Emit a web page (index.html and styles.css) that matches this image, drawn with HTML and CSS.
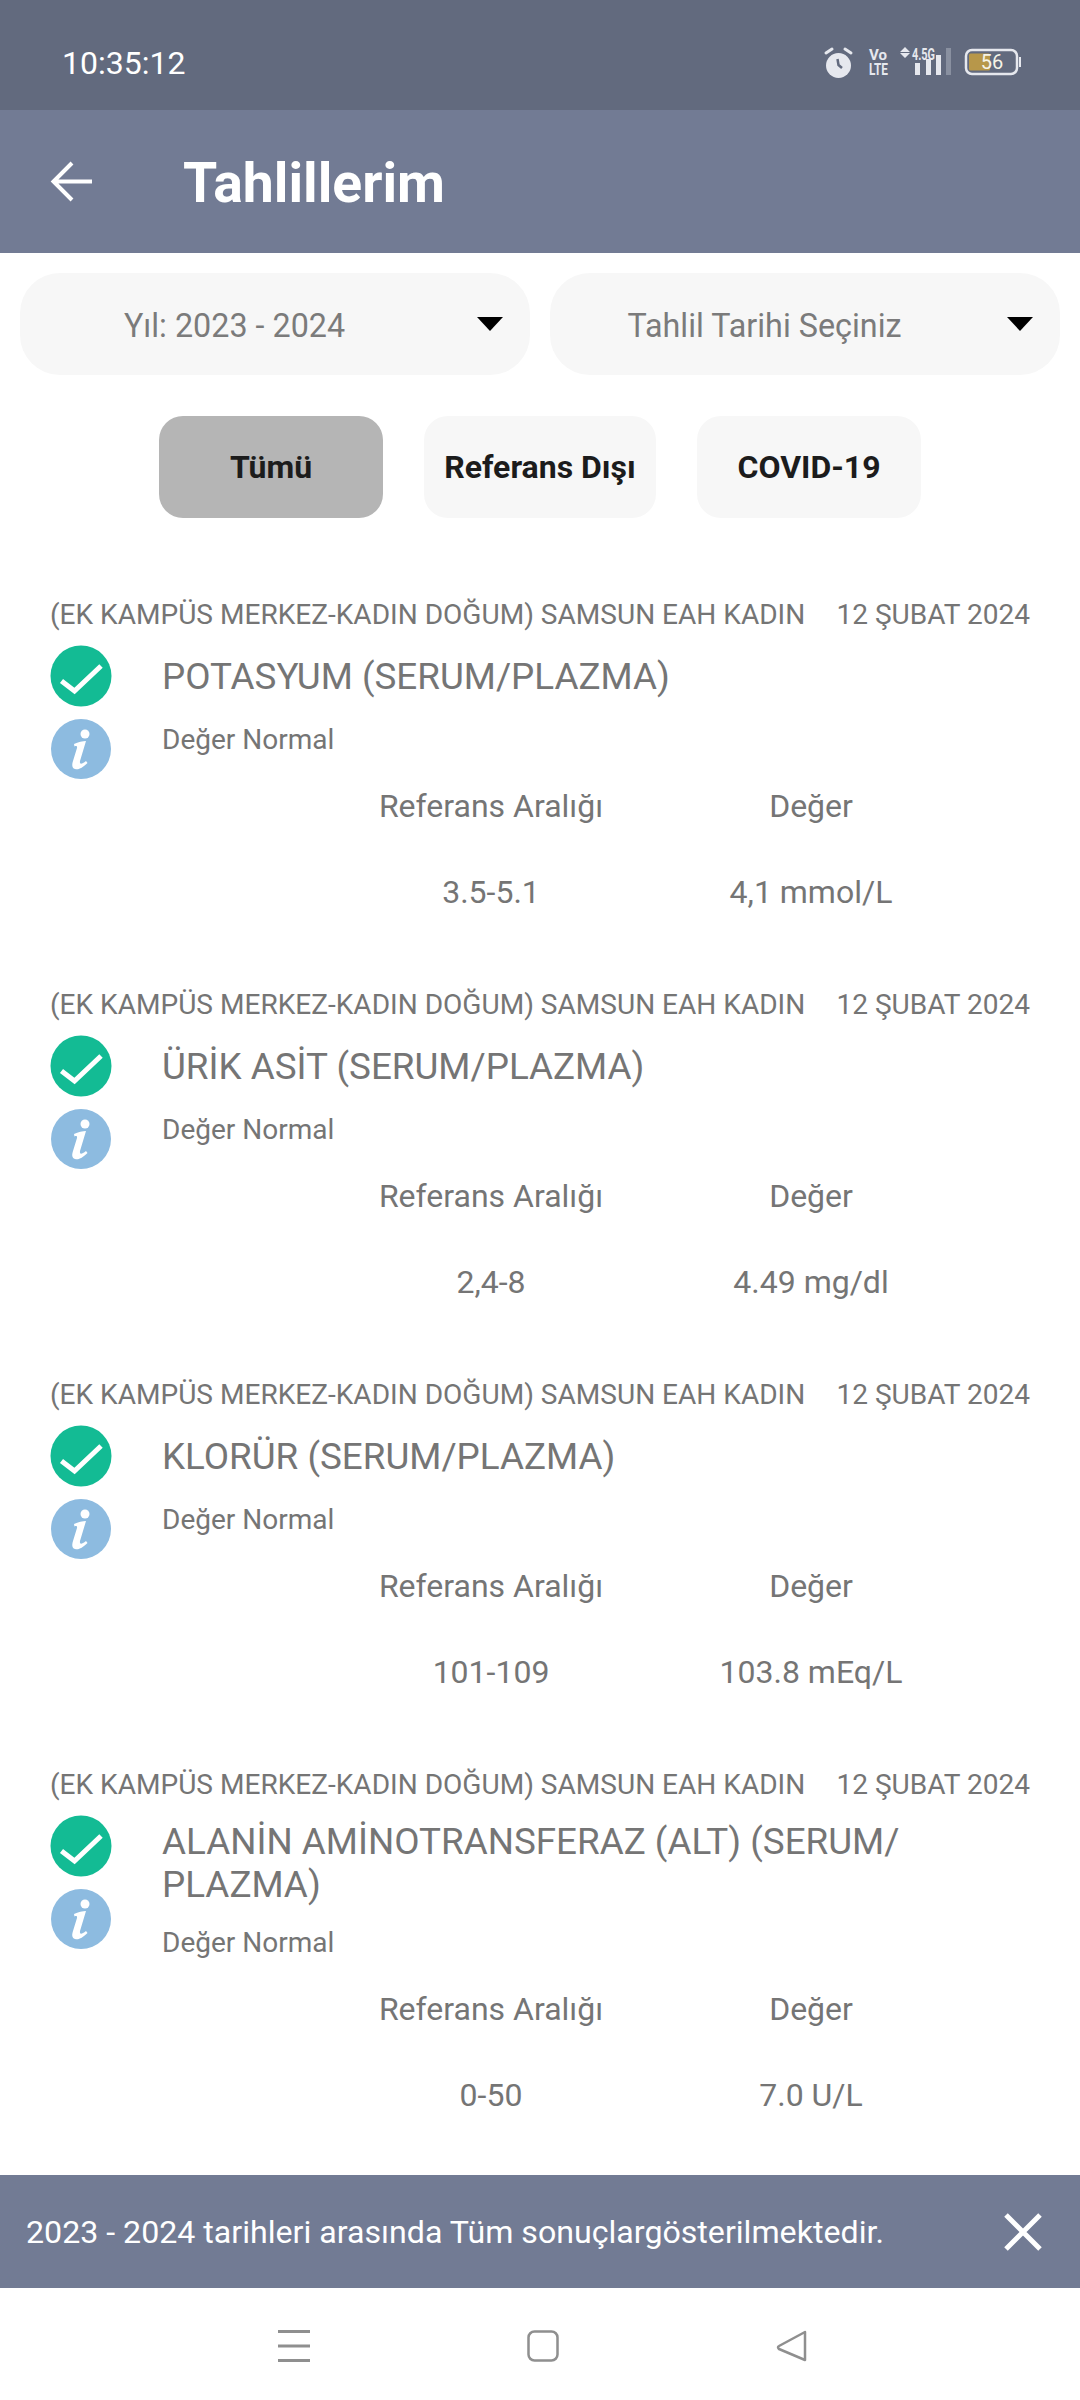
FILE: index.html
```html
<!DOCTYPE html>
<html lang="tr">
<head>
<meta charset="utf-8">
<title>Tahlillerim</title>
<link rel="stylesheet" href="styles.css">
</head>
<body>
<div class="page">
  <div class="statusbar">
    <span class="time">10:35:12</span>
    <svg class="status-icons" width="202" height="38" viewBox="0 -4 202 38">
      <g fill="#e6e8ee">
        <circle cx="18.500" cy="19.500" r="12.500"/>
        <path d="M6 7 L12 3 M25 3 L31 7" stroke="#e6e8ee" stroke-width="3" stroke-linecap="round" fill="none"/>
        <path d="M17.500 13 L18.500 19 L22 22" stroke="#626a7e" stroke-width="2.500" fill="none"/>
        <text class="st-vo" x="49" y="14" textLength="18" lengthAdjust="spacingAndGlyphs">Vo</text>
        <text class="st-lte" x="49" y="29" textLength="19" lengthAdjust="spacingAndGlyphs">LTE</text>
        <path d="M80 6 L85 1 L90 6Z M80 7 L90 7 L85 12Z"/>
        <text class="st-net" x="92" y="14" textLength="23" lengthAdjust="spacingAndGlyphs">4.5G</text>
        <rect x="95" y="17" width="5" height="12"/>
        <rect x="106" y="13" width="5" height="16"/>
        <rect x="116" y="9" width="5" height="20"/>
        <rect x="126" y="2" width="5" height="27" opacity=".3"/>
      </g>
      <rect x="146" y="4" width="51" height="24" rx="6" fill="none" stroke="#e6e8ee" stroke-width="2.500"/>
      <rect x="149" y="7.500" width="21" height="17" rx="1.500" fill="#b7974a"/>
      <text class="st-batt" x="172" y="23" text-anchor="middle">56</text>
      <rect x="199" y="11" width="2" height="10" fill="#e6e8ee"/>
    </svg>
  </div>
  <header class="appbar">
    <svg class="back" width="44" height="44" viewBox="0 0 44 44"><path d="M42 21.500H4 M22 3 L3.500 21.500 L22 40" fill="none" stroke="#fff" stroke-width="4" stroke-linejoin="miter"/></svg>
    <h1 class="title">Tahlillerim</h1>
  </header>
  <main class="content">
    <div class="filters">
      <div class="select"><span class="select-label">Yıl: 2023 - 2024</span><i class="caret"></i></div>
      <div class="select"><span class="select-label">Tahlil Tarihi Seçiniz</span><i class="caret"></i></div>
    </div>
    <div class="tabs">
      <button class="tab tab-active">Tümü</button>
      <button class="tab tab-ref">Referans Dışı</button>
      <button class="tab">COVID-19</button>
    </div>
    <section class="results">
      <article class="item">
        <div class="item-head"><span>(EK KAMPÜS MERKEZ-KADIN DOĞUM) SAMSUN EAH KADIN</span><span>12 ŞUBAT 2024</span></div>
        <div class="item-body">
          <div class="badges">
            <svg class="badge" viewBox="0 0 62 62"><circle cx="31" cy="31" r="30.500" fill="#13bb94"/><path d="M11.500 36 L24.500 46 L51 21" fill="none" stroke="#fff" stroke-width="5"/></svg>
            <svg class="badge" viewBox="0 0 62 62"><circle cx="31" cy="31" r="30" fill="#8dbbe0"/><circle cx="35" cy="16" r="4.500" fill="#fff"/><path d="M24 26 C28 24 33 23 36 23 L30 43 C29.500 46 31 47 36 43 L37.500 45 C32 50 29 52 25 51 C21.500 50 22 46 23 43 L27 30 C27.500 28 26 27.500 24.500 28.500Z" fill="#fff"/></svg>
          </div>
          <div class="item-text">
            <div class="item-name">POTASYUM (SERUM/PLAZMA)</div>
            <div class="item-status">Değer Normal</div>
          </div>
        </div>
        <div class="ref">
          <span>Referans Aralığı</span><span>Değer</span>
          <span>3.5-5.1</span><span>4,1 mmol/L</span>
        </div>
      </article>
      <article class="item">
        <div class="item-head"><span>(EK KAMPÜS MERKEZ-KADIN DOĞUM) SAMSUN EAH KADIN</span><span>12 ŞUBAT 2024</span></div>
        <div class="item-body">
          <div class="badges">
            <svg class="badge" viewBox="0 0 62 62"><circle cx="31" cy="31" r="30.500" fill="#13bb94"/><path d="M11.500 36 L24.500 46 L51 21" fill="none" stroke="#fff" stroke-width="5"/></svg>
            <svg class="badge" viewBox="0 0 62 62"><circle cx="31" cy="31" r="30" fill="#8dbbe0"/><circle cx="35" cy="16" r="4.500" fill="#fff"/><path d="M24 26 C28 24 33 23 36 23 L30 43 C29.500 46 31 47 36 43 L37.500 45 C32 50 29 52 25 51 C21.500 50 22 46 23 43 L27 30 C27.500 28 26 27.500 24.500 28.500Z" fill="#fff"/></svg>
          </div>
          <div class="item-text">
            <div class="item-name">ÜRİK ASİT (SERUM/PLAZMA)</div>
            <div class="item-status">Değer Normal</div>
          </div>
        </div>
        <div class="ref">
          <span>Referans Aralığı</span><span>Değer</span>
          <span>2,4-8</span><span>4.49 mg/dl</span>
        </div>
      </article>
      <article class="item">
        <div class="item-head"><span>(EK KAMPÜS MERKEZ-KADIN DOĞUM) SAMSUN EAH KADIN</span><span>12 ŞUBAT 2024</span></div>
        <div class="item-body">
          <div class="badges">
            <svg class="badge" viewBox="0 0 62 62"><circle cx="31" cy="31" r="30.500" fill="#13bb94"/><path d="M11.500 36 L24.500 46 L51 21" fill="none" stroke="#fff" stroke-width="5"/></svg>
            <svg class="badge" viewBox="0 0 62 62"><circle cx="31" cy="31" r="30" fill="#8dbbe0"/><circle cx="35" cy="16" r="4.500" fill="#fff"/><path d="M24 26 C28 24 33 23 36 23 L30 43 C29.500 46 31 47 36 43 L37.500 45 C32 50 29 52 25 51 C21.500 50 22 46 23 43 L27 30 C27.500 28 26 27.500 24.500 28.500Z" fill="#fff"/></svg>
          </div>
          <div class="item-text">
            <div class="item-name">KLORÜR (SERUM/PLAZMA)</div>
            <div class="item-status">Değer Normal</div>
          </div>
        </div>
        <div class="ref">
          <span>Referans Aralığı</span><span>Değer</span>
          <span>101-109</span><span>103.8 mEq/L</span>
        </div>
      </article>
      <article class="item">
        <div class="item-head"><span>(EK KAMPÜS MERKEZ-KADIN DOĞUM) SAMSUN EAH KADIN</span><span>12 ŞUBAT 2024</span></div>
        <div class="item-body">
          <div class="badges">
            <svg class="badge" viewBox="0 0 62 62"><circle cx="31" cy="31" r="30.500" fill="#13bb94"/><path d="M11.500 36 L24.500 46 L51 21" fill="none" stroke="#fff" stroke-width="5"/></svg>
            <svg class="badge" viewBox="0 0 62 62"><circle cx="31" cy="31" r="30" fill="#8dbbe0"/><circle cx="35" cy="16" r="4.500" fill="#fff"/><path d="M24 26 C28 24 33 23 36 23 L30 43 C29.500 46 31 47 36 43 L37.500 45 C32 50 29 52 25 51 C21.500 50 22 46 23 43 L27 30 C27.500 28 26 27.500 24.500 28.500Z" fill="#fff"/></svg>
          </div>
          <div class="item-text">
            <div class="item-name">ALANİN AMİNOTRANSFERAZ (ALT) (SERUM/<br>PLAZMA)</div>
            <div class="item-status">Değer Normal</div>
          </div>
        </div>
        <div class="ref">
          <span>Referans Aralığı</span><span>Değer</span>
          <span>0-50</span><span>7.0 U/L</span>
        </div>
      </article>
    </section>
  </main>
  <div class="banner">
    <span class="banner-text">2023 - 2024 tarihleri arasında Tüm sonuçlargösterilmektedir.</span>
    <svg class="close" width="38" height="38" viewBox="0 0 38 38"><path d="M2 2 L36 36 M36 2 L2 36" stroke="#fff" stroke-width="5" fill="none"/></svg>
  </div>
  <nav class="navbar">
    <svg width="32" height="32" viewBox="0 0 32 32"><path d="M0 1.500H32 M0 16H32 M0 30.500H32" stroke="#8f8f8f" stroke-width="3" fill="none"/></svg>
    <svg width="32" height="32" viewBox="0 0 32 32"><rect x="1.500" y="1.500" width="29" height="29" rx="6" fill="none" stroke="#8f8f8f" stroke-width="2.500"/></svg>
    <svg width="32" height="32" viewBox="0 0 32 32"><path d="M29 2 L3 16 Q1 17 3 19 L29 30Z" fill="none" stroke="#8f8f8f" stroke-width="2.500" stroke-linejoin="round"/></svg>
  </nav>
</div>
</body>
</html>
```

FILE: styles.css
```css
* { box-sizing: border-box; }
html, body { margin: 0; padding: 0; background: #fff; }
body { font-family: Roboto, "Noto Sans", sans-serif; color: #757575; }
.page { width: 1080px; height: 2400px; display: flex; flex-direction: column; overflow: hidden; }

.statusbar { height: 110px; background: #626a7e; display: flex; align-items: flex-start; justify-content: space-between; padding: 43px 58px 0 62px; flex: none; }
.time { color: #fff; font-size: 32px; line-height: 40px; }
.status-icons { display: block; margin-top: -1px; }
.st-vo { font: 700 14px Roboto, sans-serif; fill: #e6e8ee; }
.st-lte { font: 700 17px Roboto, sans-serif; fill: #e6e8ee; }
.st-net { font: 700 17px Roboto, sans-serif; fill: #e6e8ee; }
.st-batt { font: 400 20px Roboto, sans-serif; fill: #f6f3e6; }

.appbar { height: 143px; background: #727b94; display: flex; align-items: center; padding-left: 50px; flex: none; }
.back { display: block; }
.title { margin: 4px 0 0 89px; color: #fff; font-size: 55.3px; line-height: 60px; font-weight: 700; }

.content { flex: 1; min-height: 0; overflow: hidden; }
.filters { display: flex; gap: 20px; padding: 20px 20px 0; }
.select { flex: 1; height: 102px; background: #f7f7f7; border-radius: 40px; display: flex; align-items: center; gap: 28px; padding-right: 27px; }
.select-label { flex: 1; text-align: center; font-size: 32.3px; line-height: 40px; padding-top: 3px; color: #7b7b7b; }
.caret { display: block; width: 0; height: 0; border-left: 13px solid transparent; border-right: 13px solid transparent; border-top: 14px solid #000; }

.tabs { display: flex; justify-content: center; gap: 41px; margin-top: 41px; }
.tab { height: 102px; width: 224px; border: 0; border-radius: 24px; background: #f7f7f7; font-family: inherit; font-size: 32px; font-weight: 700; color: #1c1c1c; padding: 0; }
.tab-ref { width: 232px; }
.tab-active { background: #b5b5b5; }

.results { margin-top: 80px; }
.item { padding: 0 50px; margin-bottom: 77px; }
.item-head { display: flex; justify-content: space-between; font-size: 28.05px; line-height: 34px; color: #757575; }
.item-body { display: flex; margin-top: 13px; }
.badges { width: 112px; flex: none; display: flex; flex-direction: column; gap: 11px; }
.badge { width: 62px; height: 62px; display: block; }
.item-text { flex: 1; padding: 4.500px 0 24.500px; }
.item-name { font-size: 36.8px; line-height: 43px; min-height: 53px; display: flex; align-items: center; color: #757575; }
.item-status { font-size: 28px; line-height: 33px; margin-top: 20px; color: #757575; }
.ref { display: grid; grid-template-columns: 320px 320px; margin: 7px 0 0 281px; row-gap: 48px; font-size: 32px; line-height: 38px; text-align: center; color: #757575; }

.banner { height: 113px; flex: none; background: #727b94; display: flex; align-items: center; justify-content: space-between; padding: 0 38px 0 26px; }
.banner-text { color: #fff; font-size: 32.15px; line-height: 40px; }
.close { display: block; }

.navbar { height: 112px; flex: none; background: #fff; display: flex; align-items: flex-start; justify-content: center; gap: 217px; padding: 42px 0 0 6px; }
.navbar svg { display: block; }
```
